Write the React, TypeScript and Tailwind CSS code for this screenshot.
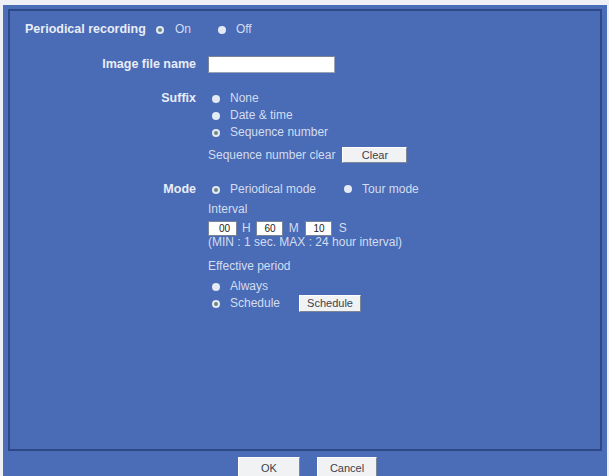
import { useState } from 'react';

const fontStack = { fontFamily: '"Liberation Sans", Arial, sans-serif' };

function Radio({ checked, onClick }: { checked: boolean; onClick?: () => void }) {
    return (
        <span
            onClick={onClick}
            className="inline-flex h-[8px] w-[8px] shrink-0 cursor-pointer items-center justify-center rounded-full bg-[#e3eaf4]"
        >
            {checked && <span className="h-[4px] w-[4px] rounded-full bg-[#6d8a7c]" />}
        </span>
    );
}

function Choice({
    label,
    checked,
    onClick,
}: {
    label: string;
    checked: boolean;
    onClick?: () => void;
}) {
    return (
        <span className="inline-flex items-center">
            <Radio checked={checked} onClick={onClick} />
            <span className="ml-[10px] text-[#d3ddf1]">{label}</span>
        </span>
    );
}

function FlatButton({ label, w, h }: { label: string; w: string; h: string }) {
    return (
        <button
            className={`${w} ${h} border border-t-[#ffffff] border-l-[#ffffff] border-b-[#7d8696] border-r-[#7d8696] bg-[#f1f2f4] text-[11px] leading-none text-[#3a414d]`}
        >
            {label}
        </button>
    );
}

function Label({ children }: { children: React.ReactNode }) {
    return (
        <div className="w-[186px] shrink-0 text-right text-[12.5px] font-bold text-[#e8edf7]">
            {children}
        </div>
    );
}

export default function App() {
    const [recording, setRecording] = useState('on');
    const [suffix, setSuffix] = useState('sequence');
    const [mode, setMode] = useState('periodical');
    const [period, setPeriod] = useState('schedule');

    return (
        <div
            style={fontStack}
            className="h-[476px] w-[609px] overflow-hidden bg-[#eef0f5] pl-[3px] pr-[2px] pt-[5px] text-[12px]"
        >
            <div className="h-full bg-[#4b6db8] px-[5px] pt-[4px]">
                <div className="h-[442px] border-2 border-[#2d4788] bg-[#4a6bb5] leading-[17px]">
                    {/* on / off */}
                    <div className="mt-[10px] flex h-[17px] items-center pl-[15px]">
                        <span className="text-[12.5px] font-bold text-[#e8edf7]">Periodical recording</span>
                        <span className="ml-[10px] inline-flex items-center">
                            <Radio checked={recording === 'on'} onClick={() => setRecording('on')} />
                            <span className="ml-[11px] text-[#d3ddf1]">On</span>
                        </span>
                        <span className="ml-[27px] inline-flex items-center">
                            <Radio checked={recording === 'off'} onClick={() => setRecording('off')} />
                            <span className="ml-[10px] text-[#d3ddf1]">Off</span>
                        </span>
                    </div>

                    {/* file name */}
                    <div className="mt-[18px] flex h-[17px] items-center gap-[12px]">
                        <Label>Image file name</Label>
                        <input className="h-[17px] w-[127px] border border-[#9aa4b8] border-t-[#7a8498] border-l-[#7a8498] bg-white px-1 text-[11px] outline-none" />
                    </div>

                    {/* suffix */}
                    <div className="mt-[17px] flex gap-[12px]">
                        <Label>Suffix</Label>
                        <div className="flex flex-col pl-[4px]">
                            <div className="flex h-[17px] items-center">
                                <Choice label="None" checked={suffix === 'none'} onClick={() => setSuffix('none')} />
                            </div>
                            <div className="flex h-[17px] items-center">
                                <Choice label="Date & time" checked={suffix === 'date'} onClick={() => setSuffix('date')} />
                            </div>
                            <div className="flex h-[17px] items-center">
                                <Choice
                                    label="Sequence number"
                                    checked={suffix === 'sequence'}
                                    onClick={() => setSuffix('sequence')}
                                />
                            </div>
                        </div>
                    </div>

                    <div className="mt-[6px] flex h-[16px] items-center gap-[12px]">
                        <div className="w-[186px] shrink-0" />
                        <span className="text-[#d3ddf1]">Sequence number clear</span>
                        <span className="ml-[-5px]">
                            <FlatButton label="Clear" w="w-[65px]" h="h-[16px]" />
                        </span>
                    </div>

                    {/* mode */}
                    <div className="mt-[18px] flex gap-[12px]">
                        <Label>Mode</Label>
                        <div className="flex flex-col">
                            <div className="flex h-[17px] items-center pl-[4px]">
                                <Choice
                                    label="Periodical mode"
                                    checked={mode === 'periodical'}
                                    onClick={() => setMode('periodical')}
                                />
                                <span className="ml-[28px]">
                                    <Choice label="Tour mode" checked={mode === 'tour'} onClick={() => setMode('tour')} />
                                </span>
                            </div>

                            <div className="mt-[3px] flex h-[17px] items-center text-[#d3ddf1]">Interval</div>

                            <div className="mt-[3px] flex h-[15px] items-center text-[#d3ddf1]">
                                <input
                                    defaultValue="00"
                                    className="h-[15px] w-[29px] border border-[#7a8498] bg-white px-[6px] text-right text-[10px] text-[#222] outline-none"
                                />
                                <span className="mx-[5px]">H</span>
                                <input
                                    defaultValue="60"
                                    className="h-[15px] w-[27px] border border-[#7a8498] bg-white px-[6px] text-right text-[10px] text-[#222] outline-none"
                                />
                                <span className="mx-[6px]">M</span>
                                <input
                                    defaultValue="10"
                                    className="h-[15px] w-[27px] border border-[#7a8498] bg-white px-[6px] text-right text-[10px] text-[#222] outline-none"
                                />
                                <span className="ml-[7px]">S</span>
                            </div>

                            <div className="flex h-[12px] items-center text-[#d3ddf1]">
                                (MIN : 1 sec. MAX : 24 hour interval)
                            </div>

                            <div className="mt-[10px] flex h-[17px] items-center text-[#d3ddf1]">Effective period</div>

                            <div className="mt-[3px] flex h-[17px] items-center pl-[4px]">
                                <Choice label="Always" checked={period === 'always'} onClick={() => setPeriod('always')} />
                            </div>
                            <div className="flex h-[17px] items-center pl-[4px]">
                                <Choice
                                    label="Schedule"
                                    checked={period === 'schedule'}
                                    onClick={() => setPeriod('schedule')}
                                />
                                <span className="ml-[19px]">
                                    <FlatButton label="Schedule" w="w-[62px]" h="h-[17px]" />
                                </span>
                            </div>
                        </div>
                    </div>
                </div>

                {/* footer buttons */}
                <div className="mt-[6px] flex justify-center gap-[17px] pl-[5px]">
                    <FlatButton label="OK" w="w-[62px]" h="h-[22px]" />
                    <FlatButton label="Cancel" w="w-[60px]" h="h-[22px]" />
                </div>
            </div>
        </div>
    );
}
